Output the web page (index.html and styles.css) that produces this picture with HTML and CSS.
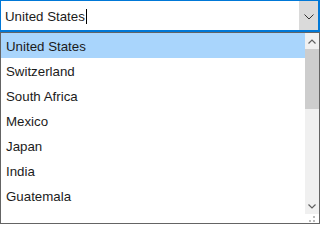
FILE: index.html
```html
<!DOCTYPE html>
<html>
<head>
<meta charset="utf-8">
<link rel="stylesheet" href="styles.css">
</head>
<body>
<div class="combo">
  <div class="value"><span>United States</span><span class="caret"></span></div>
  <div class="btn">
    <svg width="10" height="6" viewBox="0 0 10 6"><path d="M0.5 0.5 L5 5 L9.5 0.5" fill="none" stroke="#333" stroke-width="1"/></svg>
  </div>
</div>
<div class="dropdown">
  <ul class="list">
    <li class="sel">United States</li>
    <li>Switzerland</li>
    <li>South Africa</li>
    <li>Mexico</li>
    <li>Japan</li>
    <li>India</li>
    <li>Guatemala</li>
  </ul>
  <div class="scrollbar">
    <div class="arrow"><svg width="8" height="5" viewBox="0 0 8 5"><path d="M0.5 4.5 L4 1 L7.5 4.5" fill="none" stroke="#606060" stroke-width="1.2"/></svg></div>
    <div class="thumb"></div>
    <div class="track"></div>
    <div class="arrow"><svg width="8" height="5" viewBox="0 0 8 5"><path d="M0.5 0.5 L4 4 L7.5 0.5" fill="none" stroke="#606060" stroke-width="1.2"/></svg></div>
    <div class="grip"><svg width="14" height="9" viewBox="0 0 14 9"><rect x="8" y="2" width="2" height="2" fill="#bcbcbc"/><rect x="4" y="6" width="2" height="2" fill="#bcbcbc"/><rect x="8" y="6" width="2" height="2" fill="#bcbcbc"/></svg></div>
  </div>
</div>
</body>
</html>
```
FILE: styles.css
```css
html, body {
  margin: 0;
  padding: 0;
  background: #fff;
}
body {
  width: 320px;
  height: 225px;
  overflow: hidden;
  font-family: "Liberation Sans", Arial, sans-serif;
  font-size: 13.3px;
  color: #1b1b1b;
}
.combo {
  box-sizing: border-box;
  height: 32px;
  border-style: solid;
  border-color: #0078d7;
  border-width: 1px 2px 2px 1px;
  display: flex;
}
.value {
  flex: 1;
  display: flex;
  align-items: center;
  padding-left: 4px;
  padding-top: 1px;
}
.caret {
  display: inline-block;
  width: 1px;
  height: 15px;
  background: #000;
  margin-left: 1px;
}
.btn {
  width: 19px;
  background: #dadada;
  display: flex;
  align-items: center;
  justify-content: center;
  padding-top: 3px;
  box-sizing: border-box;
}
.btn svg { display: block; }
.dropdown {
  box-sizing: border-box;
  height: 192px;
  border: 1px solid #646464;
  display: flex;
}
.list {
  flex: 1;
  margin: 0;
  padding: 0;
  list-style: none;
}
.list li {
  box-sizing: border-box;
  height: 25px;
  line-height: 25px;
  padding: 1px 0 0 5px;
}
.list li.sel {
  background: #a9d5fc;
}
.scrollbar {
  width: 14px;
  display: flex;
  flex-direction: column;
}
.arrow {
  height: 16px;
  background: #f0f0f0;
  display: flex;
  align-items: center;
  justify-content: center;
}
.arrow svg { display: block; }
.thumb {
  height: 60px;
  background: #cdcdcd;
}
.track {
  flex: 1;
  background: #f0f0f0;
}
.grip {
  height: 9px;
  background: #fff;
}
.grip svg { display: block; }
```
